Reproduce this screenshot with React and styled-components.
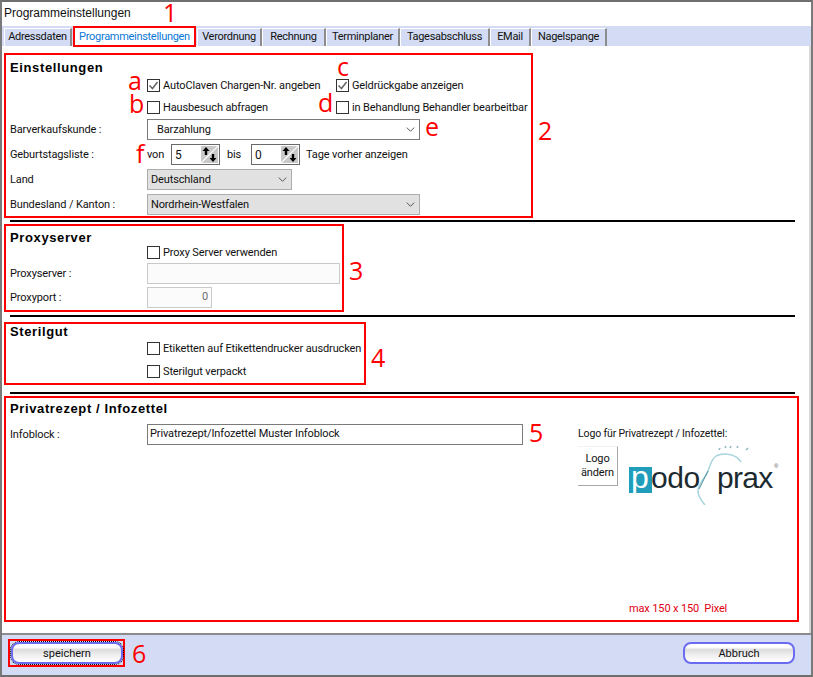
import React from 'react';
import styled, { createGlobalStyle } from 'styled-components';

const GlobalStyle = createGlobalStyle`
  html, body {
    margin: 0;
    padding: 0;
    background: #fff;
  }
  * {
    box-sizing: border-box;
  }
`;

const Window = styled.div`
  width: 813px;
  height: 677px;
  display: flex;
  flex-direction: column;
  border-top: 2px solid #6f6f6f;
  border-left: 2px solid #7a7a7a;
  border-right: 2px solid #7a7a7a;
  border-bottom: 2px solid #6f6f6f;
  font-family: Roboto, "Liberation Sans", Arial, sans-serif;
  font-size: 11px;
  letter-spacing: -0.13px;
  color: #111;
`;

const TitleBar = styled.div`
  height: 24px;
  flex: none;
  padding: 4px 0 0 2px;
  font-family: "Liberation Sans", Arial, sans-serif;
  font-size: 12px;
  letter-spacing: 0;
  line-height: 14px;
  position: relative;
`;

const TabStrip = styled.div`
  height: 20px;
  flex: none;
  display: flex;
  align-items: flex-end;
  padding-left: 2px;
  background: #d3dcf4;
  letter-spacing: -0.3px;
  position: relative;
`;

const Tab = styled.div`
  width: ${(props) => props.$width}px;
  height: 18px;
  flex: none;
  text-align: center;
  line-height: 15px;
  border-top: 1px solid #fff;
  border-left: 1px solid #fff;
  border-right: 2px solid #8c8c8c;
`;

const ActiveTab = styled.div`
  width: 123px;
  height: 21px;
  flex: none;
  margin: 0 1px -1px 1px;
  text-align: center;
  line-height: 18px;
  color: #0a78d7;
  background: #fff;
  border: 2px solid #f00;
`;

const Content = styled.div`
  flex: 1;
  min-height: 0;
  display: flex;
  flex-direction: column;
  padding: 7px 0 0 2px;
  border-right: 2px solid #d8d8d8;
`;

const Section = styled.section`
  position: relative;
  width: ${(props) => props.$width}px;
  height: ${(props) => props.$height}px;
  flex: none;
  display: flex;
  flex-direction: column;
  border: 2px solid #f00;
  padding: ${(props) => props.$top}px 0 0 4px;
`;

const Heading = styled.h2`
  margin: 0;
  height: 15px;
  font-family: "Liberation Sans", Arial, sans-serif;
  font-size: 13px;
  line-height: 15px;
  font-weight: bold;
  letter-spacing: 0.62px;
  color: #000;
`;

const Divider = styled.hr`
  width: 785px;
  height: 2px;
  flex: none;
  margin: ${(props) => props.$top}px 0 ${(props) => props.$bottom}px 6px;
  border: 0;
  background: #000;
`;

const Row = styled.div`
  height: ${(props) => props.$height || 21}px;
  flex: none;
  margin-top: ${(props) => props.$gap || 0}px;
  display: flex;
  align-items: center;
`;

const Label = styled.div`
  width: 137px;
  flex: none;
`;

const CheckWrap = styled.div`
  width: ${(props) => props.$width || 'auto'};
  flex: none;
  display: flex;
  align-items: center;
  gap: 3px;
  white-space: nowrap;
`;

const Box = styled.span`
  width: 13px;
  height: 13px;
  flex: none;
  display: flex;
  align-items: center;
  justify-content: center;
  border: 1px solid #333;
  background: #fff;
`;

const Select = styled.div`
  width: ${(props) => props.$width}px;
  height: 21px;
  flex: none;
  display: flex;
  align-items: center;
  justify-content: space-between;
  padding: 0 4px 0 ${(props) => props.$indent || 3}px;
  background: ${(props) => (props.$disabled ? '#e1e1e1' : '#fff')};
  border: 1px solid ${(props) => (props.$disabled ? '#adadad' : '#7a7a7a')};
`;

const SpinBox = styled.div`
  width: 49px;
  height: 21px;
  flex: none;
  display: flex;
  align-items: center;
  justify-content: space-between;
  padding: 0 1px 0 3px;
  font-size: 12px;
  border: 1px solid #6a6a6a;
  background: #fff;
`;

const SpinLabel = styled.span`
  width: ${(props) => props.$width}px;
  flex: none;
  padding-left: ${(props) => props.$indent || 0}px;
`;

const TextField = styled.div`
  width: ${(props) => props.$width}px;
  height: 21px;
  flex: none;
  padding: 0 3px 0 2px;
  line-height: 18px;
  text-align: ${(props) => (props.$right ? 'right' : 'left')};
  color: ${(props) => (props.$muted ? '#6d6d6d' : '#111')};
  background: ${(props) => (props.$muted ? '#fbfbfb' : '#fff')};
  border: ${(props) => (props.$muted ? '1px solid #c9c9c9' : '1px solid #7a7a7a')};
`;

const Marker = styled.span`
  position: absolute;
  left: ${(props) => props.$x}px;
  top: ${(props) => props.$y}px;
  font-family: "Open Sans", "Liberation Sans", sans-serif;
  font-size: 25px;
  letter-spacing: 0;
  line-height: 20px;
  color: #f00;
`;

const PrivatBody = styled.div`
  flex: 1;
  display: flex;
  margin-top: 8px;
`;

const PrivatLeft = styled.div`
  width: 568px;
  flex: none;
`;

const PrivatRight = styled.div`
  flex: 1;
  display: flex;
  flex-direction: column;
  padding-top: 3px;
`;

const LogoCaption = styled.div`
  font-size: 10.5px;
  line-height: 13px;
  white-space: nowrap;
`;

const LogoRow = styled.div`
  display: flex;
  align-items: flex-start;
  margin-top: 5px;
  gap: 10px;
`;

const LogoButton = styled.div`
  width: 40px;
  height: 40px;
  flex: none;
  margin-top: 1px;
  display: flex;
  align-items: center;
  justify-content: center;
  text-align: center;
  line-height: 14px;
  background: #fff;
  border-top: 1px solid #f2f2f2;
  border-right: 1px solid #a8a8a8;
  border-bottom: 1px solid #a8a8a8;
`;

const SizeNote = styled.div`
  margin: auto 0 4px 51px;
  line-height: 14px;
  white-space: pre;
  color: #e00010;
`;

const Footer = styled.footer`
  height: 42px;
  flex: none;
  display: flex;
  align-items: center;
  justify-content: space-between;
  padding: 0 16px 4px 6px;
  background: #d3dcf4;
  border-top: 2px solid #8c8c8c;
`;

const SaveFrame = styled.div`
  position: relative;
  width: 117px;
  height: 28px;
  padding: 1px 0 1px 1px;
  border: 2px solid #f00;
  display: flex;
  align-items: center;
`;

const PillButton = styled.button`
  width: 112px;
  height: 22px;
  flex: none;
  padding: 0;
  font-family: Roboto, "Liberation Sans", Arial, sans-serif;
  font-size: 11px;
  color: #111;
  border: 2px solid #6b6bf2;
  border-radius: 8px;
  background: linear-gradient(#fff 0%, #fff 18%, #dcdcdc 32%, #eeeeee 60%, #fff 100%);
  outline: ${(props) => (props.$focused ? '1px dotted #000' : 'none')};
`;

const FootMarker = styled(Marker)`
  left: 122px;
  top: 2px;
`;

function Check() {
  return (
    <svg width="11" height="11" viewBox="0 0 11 11">
      <polyline points="1.5,5.5 4.5,8.5 9.5,2" fill="none" stroke="#666" strokeWidth="1.5" />
    </svg>
  );
}

function CheckBox({ checked, children, width }) {
  return (
    <CheckWrap $width={width}>
      <Box>{checked ? <Check /> : null}</Box>
      {children}
    </CheckWrap>
  );
}

function Chevron() {
  return (
    <svg width="9" height="5" viewBox="0 0 9 5">
      <polyline points="0.8,0.6 4.5,4.3 8.2,0.6" fill="none" stroke="#555" strokeWidth="1" />
    </svg>
  );
}

function SpinIcon() {
  return (
    <svg width="17" height="17" viewBox="0 0 17 17">
      <rect width="17" height="17" fill="#c9c9c9" />
      <line x1="0" y1="17" x2="17" y2="0" stroke="#fff" strokeWidth="1.2" />
      <path d="M5 1 L8.5 5 H6.2 V9 H3.8 V5 H1.5 Z" fill="#000" />
      <path d="M12 16 L15.5 12 H13.2 V8 H10.8 V12 H8.5 Z" fill="#000" />
    </svg>
  );
}

function PodoLogo() {
  return (
    <svg width="152" height="60" viewBox="0 0 152 60">
      <path d="M113 17 C108 9 96 7 88 11 C82 15 82 24 78 30 C74 36 70 40 70 46 C70 52 74 56 77 60" fill="none" stroke="#a9d5dd" strokeWidth="1.5" />
      <path d="M80 26 L71 44" stroke="#4f8f9c" strokeWidth="1" />
      <path d="M91 5 l1 -2 M97 3 l1 -2 M102 3 l1 -2 M109 3 l1 -2 M118 5 l2 -2" stroke="#8fb9c2" strokeWidth="1.6" />
      <rect x="1" y="22" width="23" height="26" fill="#1f9dbb" />
      <text x="3" y="43" fontFamily="Liberation Sans" fontSize="32" fill="#fff">p</text>
      <text x="23" y="43" fontFamily="Liberation Sans" fontSize="30" fill="#1c2a30" textLength="49">odo</text>
      <text x="89" y="43" fontFamily="Liberation Sans" fontSize="30" fill="#1c2a30" textLength="56">prax</text>
      <text x="146" y="23" fontFamily="Liberation Sans" fontSize="6" fill="#555">®</text>
    </svg>
  );
}

const TABS = [
  ['Adressdaten', 68],
  null,
  ['Verordnung', 65],
  ['Rechnung', 64],
  ['Terminplaner', 74],
  ['Tagesabschluss', 90],
  ['EMail', 41],
  ['Nagelspange', 76],
];

function App() {
  return (
    <Window>
      <GlobalStyle />
      <TitleBar>
        Programmeinstellungen
        <Marker $x={161} $y={0}>1</Marker>
      </TitleBar>
      <TabStrip>
        {TABS.map((tab) => (tab
          ? <Tab key={tab[0]} $width={tab[1]}>{tab[0]}</Tab>
          : <ActiveTab key="active">Programmeinstellungen</ActiveTab>))}
      </TabStrip>
      <Content>
        <Section $width={529} $height={165} $top={5}>
          <Heading>Einstellungen</Heading>
          <Row $height={18} $gap={1}>
            <Label />
            <CheckBox width="189px" checked>AutoClaven Chargen-Nr. angeben</CheckBox>
            <CheckBox checked>Geldrückgabe anzeigen</CheckBox>
          </Row>
          <Row $height={18} $gap={4}>
            <Label />
            <CheckBox width="189px">Hausbesuch abfragen</CheckBox>
            <CheckBox>in Behandlung Behandler bearbeitbar</CheckBox>
          </Row>
          <Row $gap={3}>
            <Label>Barverkaufskunde :</Label>
            <Select $width={273} $indent={9}>Barzahlung<Chevron /></Select>
          </Row>
          <Row $gap={4}>
            <Label>Geburtstagsliste :</Label>
            <SpinLabel $width={24}>von</SpinLabel>
            <SpinBox>5<SpinIcon /></SpinBox>
            <SpinLabel $width={31} $indent={7}>bis</SpinLabel>
            <SpinBox>0<SpinIcon /></SpinBox>
            <SpinLabel $width={120} $indent={6}>Tage vorher anzeigen</SpinLabel>
          </Row>
          <Row $gap={4}>
            <Label>Land</Label>
            <Select $width={145} $disabled>Deutschland<Chevron /></Select>
          </Row>
          <Row $gap={4}>
            <Label>Bundesland / Kanton :</Label>
            <Select $width={273} $disabled>Nordrhein-Westfalen<Chevron /></Select>
          </Row>
          <Marker $x={122} $y={15}>a</Marker>
          <Marker $x={123} $y={38}>b</Marker>
          <Marker $x={331} $y={1}>c</Marker>
          <Marker $x={312} $y={37}>d</Marker>
          <Marker $x={419} $y={61}>e</Marker>
          <Marker $x={130} $y={88}>f</Marker>
          <Marker $x={532} $y={65}>2</Marker>
        </Section>
        <Divider $top={2} $bottom={2} />
        <Section $width={340} $height={88} $top={4}>
          <Heading>Proxyserver</Heading>
          <Row $height={18} $gap={-2}>
            <Label />
            <CheckBox>Proxy Server verwenden</CheckBox>
          </Row>
          <Row $gap={2}>
            <Label>Proxyserver :</Label>
            <TextField $width={193} $muted />
          </Row>
          <Row $gap={3}>
            <Label>Proxyport :</Label>
            <TextField $width={65} $muted $right>0</TextField>
          </Row>
          <Marker $x={343} $y={34}>3</Marker>
        </Section>
        <Divider $top={3} $bottom={5} />
        <Section $width={362} $height={63} $top={0}>
          <Heading>Sterilgut</Heading>
          <Row $height={18}>
            <Label />
            <CheckBox>Etiketten auf Etikettendrucker ausdrucken</CheckBox>
          </Row>
          <Row $height={18} $gap={5}>
            <Label />
            <CheckBox>Sterilgut verpackt</CheckBox>
          </Row>
          <Marker $x={365} $y={23}>4</Marker>
        </Section>
        <Divider $top={7} $bottom={2} />
        <Section $width={795} $height={226} $top={3}>
          <Heading>Privatrezept / Infozettel</Heading>
          <PrivatBody>
            <PrivatLeft>
              <Row>
                <Label>Infoblock :</Label>
                <TextField $width={376}>Privatrezept/Infozettel Muster Infoblock</TextField>
              </Row>
              <Marker $x={523} $y={24}>5</Marker>
            </PrivatLeft>
            <PrivatRight>
              <LogoCaption>Logo für Privatrezept / Infozettel:</LogoCaption>
              <LogoRow>
                <LogoButton>Logo<br />ändern</LogoButton>
                <PodoLogo />
              </LogoRow>
              <SizeNote>max 150 x 150  Pixel</SizeNote>
            </PrivatRight>
          </PrivatBody>
        </Section>
      </Content>
      <Footer>
        <SaveFrame>
          <PillButton type="button" $focused>speichern</PillButton>
          <FootMarker>6</FootMarker>
        </SaveFrame>
        <PillButton type="button">Abbruch</PillButton>
      </Footer>
    </Window>
  );
}

export default App;
